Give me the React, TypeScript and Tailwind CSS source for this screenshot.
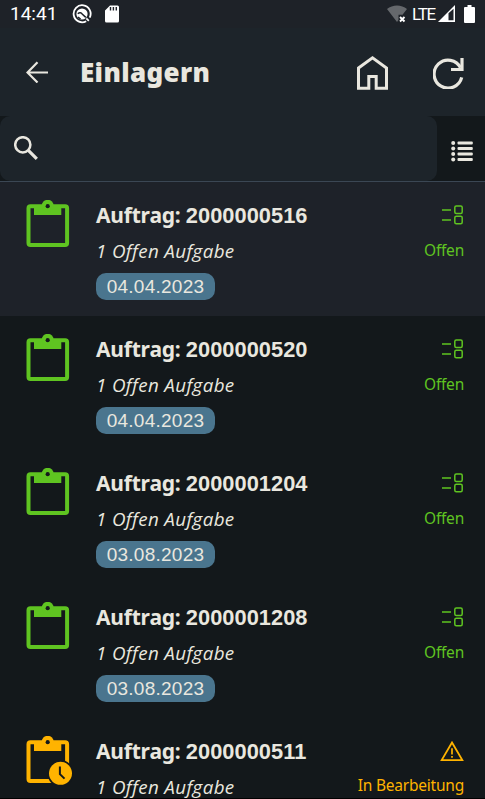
type Order = {
  id: string
  date: string
  status: "open" | "progress"
}

const orders: Order[] = [
  { id: "2000000516", date: "04.04.2023", status: "open" },
  { id: "2000000520", date: "04.04.2023", status: "open" },
  { id: "2000001204", date: "03.08.2023", status: "open" },
  { id: "2000001208", date: "03.08.2023", status: "open" },
  { id: "2000000511", date: "", status: "progress" },
]

function StatusBar() {
  return (
    <div className="flex h-7 shrink-0 items-center bg-[#1e2228] pl-[10px] font-['Roboto',sans-serif] text-white">
      <span className="w-[62px] text-[19px] leading-7">14:41</span>
      <svg className="mb-px h-5 w-5 shrink-0" viewBox="0 0 20 20" fill="none">
        <path d="M14.2 17.2A8.5 8.5 0 1 1 17.7 13.6" stroke="#fff" strokeWidth="1.8" />
        <circle cx="10" cy="10" r="5.6" fill="#fff" />
        <path d="M5.8 9.8c1.8-1.8 3.4-1 4.6.4l3.4 3.2M6 13l2.6 2" stroke="#1e2228" strokeWidth="1.5" />
        <path d="M14.4 14.4l2.4 2.4" stroke="#fff" strokeWidth="1.8" />
      </svg>
      <svg className="mb-px ml-[13px] h-[18px] w-[14px] shrink-0" viewBox="0 0 14 18">
        <path d="M5 .5h7.5A1.5 1.5 0 0 1 14 2v14a1.5 1.5 0 0 1-1.5 1.5h-11A1.5 1.5 0 0 1 0 16V5.5z" fill="#fff" />
        <path d="M5.5 2V5.5M8.4 2V5.5M11.3 2V5.5" stroke="#1e2228" strokeWidth="1.4" />
      </svg>
      <svg className="mb-px ml-auto h-[18px] w-[22px] shrink-0" viewBox="0 0 22 18">
        <path d="M0 4C5.5-.7 14.5-.7 20 4l-4.5 5.8h-4V15L10 17z" fill="#65686c" />
        <path d="M13 12l4.5 4.5M17.5 12L13 16.5" stroke="#fff" strokeWidth="1.9" />
      </svg>
      <span className="ml-[3px] w-[26px] text-[17px] leading-7 tracking-[-1.2px]">LTE</span>
      <svg className="mb-px h-[17px] w-[18px] shrink-0" viewBox="0 0 18 17">
        <path d="M0 17L17 0v17z" fill="#fff" />
        <path d="M10.5 8.3v7h5V3.7z" fill="#1e2228" />
      </svg>
      <svg className="mr-[10px] mb-px ml-[8px] h-[18px] w-[11px] shrink-0" viewBox="0 0 11 18">
        <path d="M3.5 0h4v2H10a1 1 0 0 1 1 1v14a1 1 0 0 1-1 1H1a1 1 0 0 1-1-1V3a1 1 0 0 1 1-1h2.5z" fill="#fff" />
      </svg>
    </div>
  )
}

function Header() {
  return (
    <header className="flex h-[88px] shrink-0 items-center bg-[#1d242a] pl-[26px] text-[#e9e7df]">
      <svg className="h-[22px] w-[22px] shrink-0" viewBox="0 0 22 22" fill="none" stroke="currentColor" strokeWidth="2.2">
        <path d="M22 11.5H2M11.5 1.2L1.5 11.5l10 10" />
      </svg>
      <h1 className="ml-8 font-['Noto_Sans',sans-serif] text-[26px] leading-8 font-black tracking-[0.35px]">Einlagern</h1>
      <svg className="mt-[2px] ml-auto h-[34px] w-[31px] shrink-0" viewBox="0 0 31 34" fill="none" stroke="currentColor" strokeWidth="3">
        <path d="M1.5 12L15.5 1.9 29.5 12v20.3H19.2V20.5h-7.4v11.8H1.5z" />
      </svg>
      <svg className="mt-px mr-[21px] ml-[45px] h-[32px] w-[31px] shrink-0" viewBox="0 0 31 32" fill="none" stroke="currentColor" strokeWidth="3.2">
        <path d="M28.7 20.4A14 14 0 1 1 27.6 10.8" />
        <path d="M29 1v11.5H18" />
      </svg>
    </header>
  )
}

function SearchRow() {
  return (
    <div className="flex h-[66px] shrink-0 border-b border-[#3b4754] bg-[#13181b] text-[#e9e7df]">
      <div className="flex w-[437px] items-center rounded-[10px] bg-[#1d242a] pl-[14px]">
        <svg className="mb-px h-6 w-6" viewBox="0 0 24 24" fill="none" stroke="currentColor">
          <circle cx="8.8" cy="8.8" r="7.6" strokeWidth="2.5" />
          <path d="M14.3 14.3l8.5 8.5" strokeWidth="3.2" />
        </svg>
      </div>
      <svg className="mt-[25px] ml-[13.5px] h-[21px] w-[22px]" viewBox="0 0 22 21" fill="currentColor">
        {[2, 7.5, 13, 18.5].map((y) => (
          <g key={y}>
            <circle cx="2.2" cy={y} r="2" />
            <rect x="6.5" y={y - 1.4} width="15.3" height="2.8" rx="1" />
          </g>
        ))}
      </svg>
    </div>
  )
}

function ClipboardIcon({ busy }: { busy: boolean }) {
  return (
    <svg className="h-[50px] w-[50px]" viewBox="0 0 50 50" fill="none">
      <rect x="2.5" y="6.3" width="38.6" height="38.6" rx="2" stroke="currentColor" strokeWidth="4" />
      <path d="M8 5h27.3v10H8z" fill="currentColor" />
      <circle cx="21.7" cy="5.8" r="6" fill="currentColor" />
      <circle cx="21.7" cy="6.2" r="2.1" fill="#15191c" />
      {busy && (
        <>
          <circle cx="34.5" cy="37.3" r="13.2" fill="#13181b" />
          <circle cx="34.5" cy="37.3" r="11.5" fill="currentColor" />
          <path d="M33.9 30.5v7.6l4.6 4.5" stroke="#13181b" strokeWidth="2" />
        </>
      )}
    </svg>
  )
}

function OpenIcon() {
  return (
    <svg className="h-5 w-[22px]" viewBox="0 0 22 20" fill="none" stroke="currentColor" strokeWidth="1.5">
      <path d="M0 5h9M0 15h9" strokeWidth="1.7" />
      <rect x="12.8" y="1" width="7.4" height="7.6" rx="1.5" />
      <rect x="12.8" y="11.2" width="7.4" height="7.6" rx="1.5" />
    </svg>
  )
}

function WarningIcon() {
  return (
    <svg className="h-[21px] w-[24px]" viewBox="0 0 24 21" fill="none" stroke="currentColor">
      <path d="M12 1.5L22.3 19.1H1.7z" strokeWidth="1.8" />
      <path d="M12 7.3v6.3M12 14.9v1.9" strokeWidth="1.7" />
    </svg>
  )
}

function OrderRow({ order, selected }: { order: Order; selected: boolean }) {
  const busy = order.status === "progress"
  const tone = busy ? "text-[#ffb300]" : "text-[#5fc421]"

  return (
    <li className={`flex shrink-0 pr-[21px] pl-[26px] ${order.date ? "h-[134px]" : "h-[80px]"} ${selected ? "bg-[#1e2229]" : "bg-[#13181b]"}`}>
      <div className={`mt-[18px] w-[70px] shrink-0 ${tone}`}>
        <ClipboardIcon busy={busy} />
      </div>
      <div className="flex flex-col items-start whitespace-nowrap text-[#e9e7df]">
        <div className="mt-[17px] text-[21px] leading-8 font-bold">
          <span className="font-['Noto_Sans',sans-serif] tracking-[-0.2px]">Auftrag: </span>
          <span className="font-['Liberation_Sans',sans-serif] text-[21.8px] tracking-[0.05px]">{order.id}</span>
        </div>
        <div className="mt-[8px] font-['Open_Sans','Noto_Sans',sans-serif] text-[18.8px] leading-[22px] tracking-[0.35px] italic">1 Offen Aufgabe</div>
        {order.date && (
          <div className="mt-[11px] flex h-[27px] w-[119px] items-center justify-center rounded-[10px] bg-[#4a758e] pt-px font-['Liberation_Sans',sans-serif] text-[19px] tracking-[0.25px]">
            {order.date}
          </div>
        )}
      </div>
      <div className={`ml-auto flex flex-col items-end whitespace-nowrap ${tone}`}>
        <div className="mt-[23px] h-[22px]">{busy ? <WarningIcon /> : <OpenIcon />}</div>
        <div className={`font-['Noto_Sans',sans-serif] text-[15.5px] leading-6 tracking-[-0.22px] ${busy ? "mt-[10px]" : "mt-[11px]"}`}>
          {busy ? "In Bearbeitung" : "Offen"}
        </div>
      </div>
    </li>
  )
}

export default function App() {
  return (
    <main className="flex h-[799px] w-[485px] flex-col overflow-hidden border-b border-black bg-[#13181b]">
      <StatusBar />
      <Header />
      <SearchRow />
      <ul className="flex min-h-0 flex-1 flex-col overflow-hidden">
        {orders.map((order, i) => (
          <OrderRow key={order.id} order={order} selected={i === 0} />
        ))}
      </ul>
    </main>
  )
}
